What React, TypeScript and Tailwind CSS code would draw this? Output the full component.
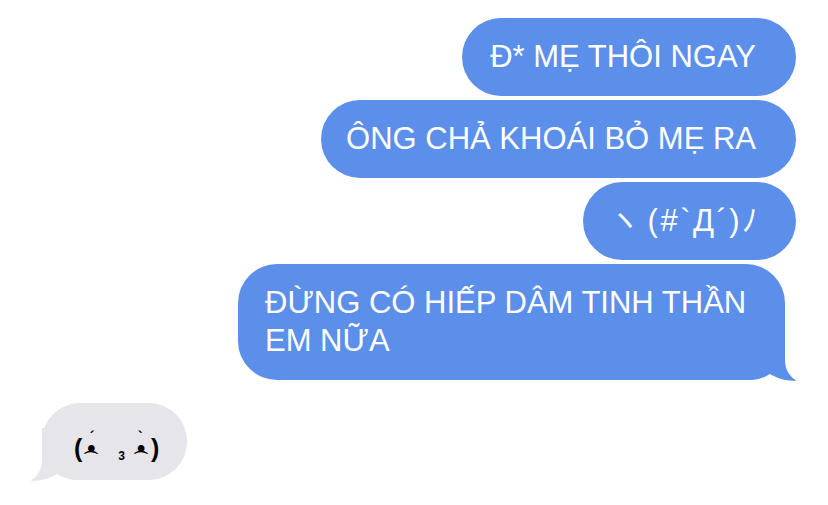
import React from "react";

const blue = "bg-[#5b8fe9]";

function Eye({ accent }: { accent: string }) {
  return (
    <span className="flex flex-col items-center w-[14px] font-['DejaVu_Sans'] text-black font-bold">
      <span className="text-[14px] leading-[13px] h-[13px]">{accent}</span>
      <span className="text-[19px] leading-[10px] h-[10px]">•</span>
      <span className="text-[16px] leading-[9px] h-[9px]">⌒</span>
    </span>
  );
}

function Tail({ fill, className }: { fill: string; className: string }) {
  return (
    <svg className={className} width="57" height="53" viewBox="0 0 57 53">
      <path d="M45 0 L45 32 C45 42 50 49 56.5 52.5 C48 53.5 38 51 30 46 C24 49.5 18 52 10 52 L0 52 L0 0 Z" fill={fill} />
    </svg>
  );
}

export default function App() {
  return (
    <div className="w-[828px] h-[505px] bg-white overflow-hidden font-['Liberation_Sans',sans-serif]">
      <div className="flex flex-col items-end pr-[32px] pt-[18px] gap-[4px]">
        <div className={`${blue} h-[78px] rounded-[39px] pl-[28px] pr-[40px] flex items-center text-white text-[31px]`}>
          Đ* MẸ THÔI NGAY
        </div>
        <div className={`${blue} h-[78px] rounded-[39px] pl-[25px] pr-[40px] flex items-center text-white text-[31px]`}>
          ÔNG CHẢ KHOÁI BỎ MẸ RA
        </div>
        <div className={`${blue} h-[78px] w-[213px] rounded-[39px] pl-[26px] flex items-center text-white text-[31px] tracking-[2.5px] whitespace-pre font-['Liberation_Sans','Noto_Sans_CJK_JP',sans-serif]`}>
          {"ヽ\u200A(#`Д´)ﾉ"}
        </div>
        <div className={`${blue} relative w-[547px] mr-[11px] rounded-[39px] pl-[27px] pr-[30px] py-[20px] text-white text-[31px] leading-[38px]`}>
          <Tail fill="#5b8fe9" className="absolute right-[-12px] bottom-[-1px]" />
          <span className="relative">ĐỪNG CÓ HIẾP DÂM TINH THẦN EM NỮA</span>
        </div>
      </div>
      <div className="pl-[42px] mt-[23px] flex">
        <div className="relative h-[77px] bg-[#e5e5ea] rounded-[38px] pl-[32px] pr-[28px] flex items-start text-black">
          <Tail fill="#e5e5ea" className="absolute left-[-12px] bottom-[-1px] -scale-x-100" />
          <span className="relative flex items-start">
            <span className="mt-[30px] font-['Liberation_Sans'] font-bold text-[25px] leading-[30px]">(</span>
            <span className="ml-[2px] mt-[28px]"><Eye accent="ˊ" /></span>
            <span className="ml-[20px] mt-[47px] text-[12px] leading-[12px] font-bold font-['Liberation_Sans']">3</span>
            <span className="ml-[9px] mt-[28px]"><Eye accent="ˋ" /></span>
            <span className="ml-[3px] mt-[30px] font-['Liberation_Sans'] font-bold text-[25px] leading-[30px]">)</span>
          </span>
        </div>
      </div>
    </div>
  );
}
